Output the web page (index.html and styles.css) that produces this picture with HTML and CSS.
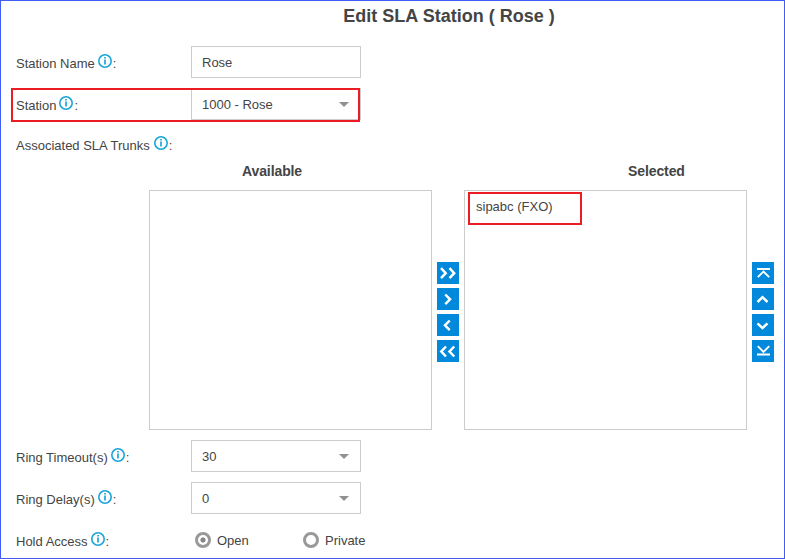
FILE: index.html
```html
<!DOCTYPE html>
<html lang="en">
<head>
<meta charset="utf-8">
<title>Edit SLA Station</title>
<link rel="stylesheet" href="styles.css">
</head>
<body>
<svg class="defs" width="0" height="0">
  <symbol id="info" viewBox="0 0 14 14">
    <circle cx="7" cy="7" r="6.2" fill="none" stroke="#1ba5d9" stroke-width="1.6"/>
    <path d="M6 3h2v1.5H6zM6 5.5h2V10.5H6z" fill="#1ba5d9" fill-opacity=".85"/>
  </symbol>
</svg>
<main class="dialog">
  <h1 class="title">Edit SLA Station ( Rose )</h1>

  <div class="row">
    <div class="label">Station Name<svg class="info"><use href="#info"/></svg>:</div>
    <div class="field">Rose</div>
  </div>
  <div class="row marked">
    <div class="label">Station<svg class="info"><use href="#info"/></svg>:</div>
    <div class="field select">1000 - Rose</div>
  </div>
  <div class="row trunks-label">
    <div class="label">Associated SLA Trunks<svg class="info"><use href="#info"/></svg>:</div>
  </div>

  <section class="transfer">
    <h2 class="head available">Available</h2>
    <h2 class="head selected">Selected</h2>
    <div class="list list-available"></div>
    <div class="buttons">
      <button><svg viewBox="0 0 22 22"><path d="M4 6.2 8.7 11.2l-4.7 5M12.5 6.2l4.7 5-4.7 5"/></svg></button>
      <button><svg viewBox="0 0 22 22"><path d="M8.3 6.5 13 11.3l-4.7 4.8"/></svg></button>
      <button><svg viewBox="0 0 22 22"><path d="M12.7 6.5 8 11.3l4.7 4.8"/></svg></button>
      <button><svg viewBox="0 0 22 22"><path d="M9 6.5l-4.7 5 4.7 5M17.2 6.5l-4.7 5 4.7 5"/></svg></button>
    </div>
    <div class="list"><div class="item">sipabc (FXO)</div></div>
    <div class="buttons">
      <button><svg viewBox="0 0 22 22"><path class="thin" d="M5 7h13M5.8 15.2l5.7-5.7 5.7 5.7"/></svg></button>
      <button><svg viewBox="0 0 22 22"><path d="M5.5 14l5-4.8 5 4.8"/></svg></button>
      <button><svg viewBox="0 0 22 22"><path d="M5.5 9.3l5 4.8 5-4.8"/></svg></button>
      <button><svg viewBox="0 0 22 22"><path class="thin" d="M5 14.5h13M5.8 6.2l5.7 5.7 5.7-5.7"/></svg></button>
    </div>
  </section>

  <div class="row">
    <div class="label">Ring Timeout(s)<svg class="info"><use href="#info"/></svg>:</div>
    <div class="field select">30</div>
  </div>
  <div class="row">
    <div class="label">Ring Delay(s)<svg class="info"><use href="#info"/></svg>:</div>
    <div class="field select">0</div>
  </div>
  <div class="row">
    <div class="label">Hold Access<svg class="info"><use href="#info"/></svg>:</div>
    <div class="radios">
      <div class="radio"><span class="dot on"></span>Open</div>
      <div class="radio"><span class="dot"></span>Private</div>
    </div>
  </div>
</main>
</body>
</html>
```
FILE: styles.css
```css
*, *::before, *::after { box-sizing: border-box; }
body {
  margin: 0;
  background: #fff;
  color: #444;
  font: 13px/16px "Liberation Sans", Arial, sans-serif;
}
.defs { position: absolute; }
.dialog {
  width: 785px;
  height: 559px;
  overflow: hidden;
  border: 1px solid #405cf5;
}
.title {
  height: 45px;
  margin: 0;
  padding: 5px 0 0 113px;
  text-align: center;
  font-size: 18px;
  line-height: 20px;
}
.row {
  position: relative;
  display: flex;
  height: 32px;
  margin-bottom: 10px;
  padding-left: 15px;
}
.label {
  display: flex;
  width: 175px;
  padding-top: 10px;
  white-space: nowrap;
}
.info {
  width: 14px;
  height: 14px;
  margin: -2px 1px 0 3px;
}
.field {
  width: 170px;
  height: 32px;
  padding: 8px 10px;
  border: 1px solid #ccc;
}
.select {
  display: flex;
  justify-content: space-between;
}
.select::after {
  content: "";
  width: 10px;
  height: 5px;
  margin: 5px 1px 0 0;
  background: #919191;
  clip-path: polygon(0 0, 100% 0, 50% 100%);
}
.marked::after {
  content: "";
  position: absolute;
  left: 10px;
  top: 0;
  width: 349px;
  height: 34px;
  border: 2px solid #ec1c24;
}
.trunks-label { height: 24px; margin-bottom: 8px; }
.trunks-label .label { padding-top: 8px; }
.trunks-label .info { margin-left: 4px; }
.transfer {
  display: grid;
  grid-template-columns: 283px 22px 283px 22px;
  grid-template-rows: 28px 240px;
  column-gap: 5px;
  margin: 0 0 10px 148px;
}
.head {
  margin: 0;
  padding-top: 1px;
  font-size: 14px;
  line-height: 16px;
  letter-spacing: -.1px;
}
.available { padding-left: 93px; }
.selected { grid-column: 3; padding-left: 164px; }
.list { border: 1px solid #ccc; }
.list-available { grid-column: 1; }
.item {
  position: relative;
  padding: 8px 11px;
}
.item::after {
  content: "";
  position: absolute;
  left: 3px;
  top: 1px;
  width: 114px;
  height: 33px;
  border: 2px solid #ec1c24;
}
.buttons {
  display: flex;
  flex-direction: column;
  gap: 4px;
  padding-top: 72px;
}
.buttons button {
  width: 22px;
  height: 22px;
  padding: 0;
  border: 0;
  background: #0289dc;
}
.buttons svg {
  display: block;
  width: 22px;
  height: 22px;
  fill: none;
  stroke: #fff;
  stroke-width: 2.5;
}
.buttons .thin { stroke-width: 1.9; }
.radios { display: flex; padding: 9px 0 0 4px; }
.radio { display: flex; width: 108px; }
.dot {
  width: 16px;
  height: 16px;
  margin: -1px 6px 0 0;
  border: 3px solid #999;
  border-radius: 50%;
}
.on { background: radial-gradient(circle, #888 2.2px, transparent 3px); }
```
